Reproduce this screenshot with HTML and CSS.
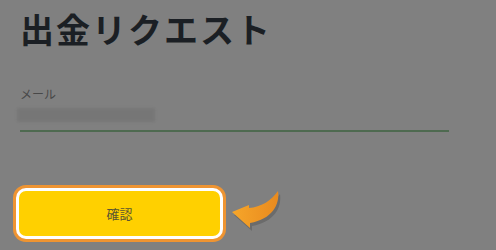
FILE: index.html
```html
<!DOCTYPE html>
<html lang="ja">
<head>
  <meta charset="UTF-8" />
  <title>出金リクエスト</title>
  <link rel="stylesheet" href="styles.css">
</head>
<body>
  <div class="main">
    <h1 class="title">出金リクエスト</h1>
    <div class="field">
      <label class="label">メール</label>
      <div class="value"><span class="blur"></span></div>
    </div>
    <div class="actions">
      <button class="confirm">確認</button>
      <svg class="arrow" width="62" height="50" viewBox="0 0 62 50">
        <defs>
          <linearGradient id="ag" x1="0" y1="0" x2="1" y2="0">
            <stop offset="0" stop-color="#f6a62a" />
            <stop offset="1" stop-color="#e98a1e" />
          </linearGradient>
        </defs>
        <path d="M5 26 L22 19 L22 22 C34 21 44 15 51 5 C53 19 45 33 23 37 L23 42 Z" fill="#555" opacity="0.5" transform="translate(2 3)" />
        <path d="M5 26 L22 19 L22 22 C34 21 44 15 51 5 C53 19 45 33 23 37 L23 42 Z" fill="url(#ag)" />
      </svg>
    </div>
  </div>
</body>
</html>
```

FILE: styles.css
```css
* {
  margin: 0;
  padding: 0;
  box-sizing: border-box;
}

body {
  background-color: #808080;
  font-family: "Noto Sans CJK JP", "Noto Sans", sans-serif;
}

.main {
  width: 496px;
  height: 250px;
  padding: 6px 0 0 20px;
}

.title {
  font-size: 34px;
  font-weight: 700;
  color: #1b1f24;
  line-height: 46px;
  letter-spacing: 2px;
}

.field {
  margin-top: 34px;
  width: 429px;
}

.label {
  display: block;
  font-size: 12px;
  line-height: 16px;
  color: #484848;
}

.value {
  height: 30px;
  padding-top: 6px;
  border-bottom: 2px solid #4e6a50;
}

.blur {
  display: block;
  width: 138px;
  height: 14px;
  margin-left: -3px;
  background-color: #767676;
  filter: blur(1.5px);
}

.actions {
  display: flex;
  align-items: flex-start;
  margin-top: 53px;
  margin-left: -7px;
}

.confirm {
  width: 207px;
  height: 51px;
  background-color: #ffd000;
  border: 3px solid #fff;
  border-radius: 10px;
  box-shadow: 0 0 0 3px #ee9432;
  margin: 3px;
  font-family: "Noto Sans CJK JP", sans-serif;
  font-size: 13px;
  color: #5a5530;
}

.arrow {
  margin-left: 1px;
  margin-top: 1px;
}
```
